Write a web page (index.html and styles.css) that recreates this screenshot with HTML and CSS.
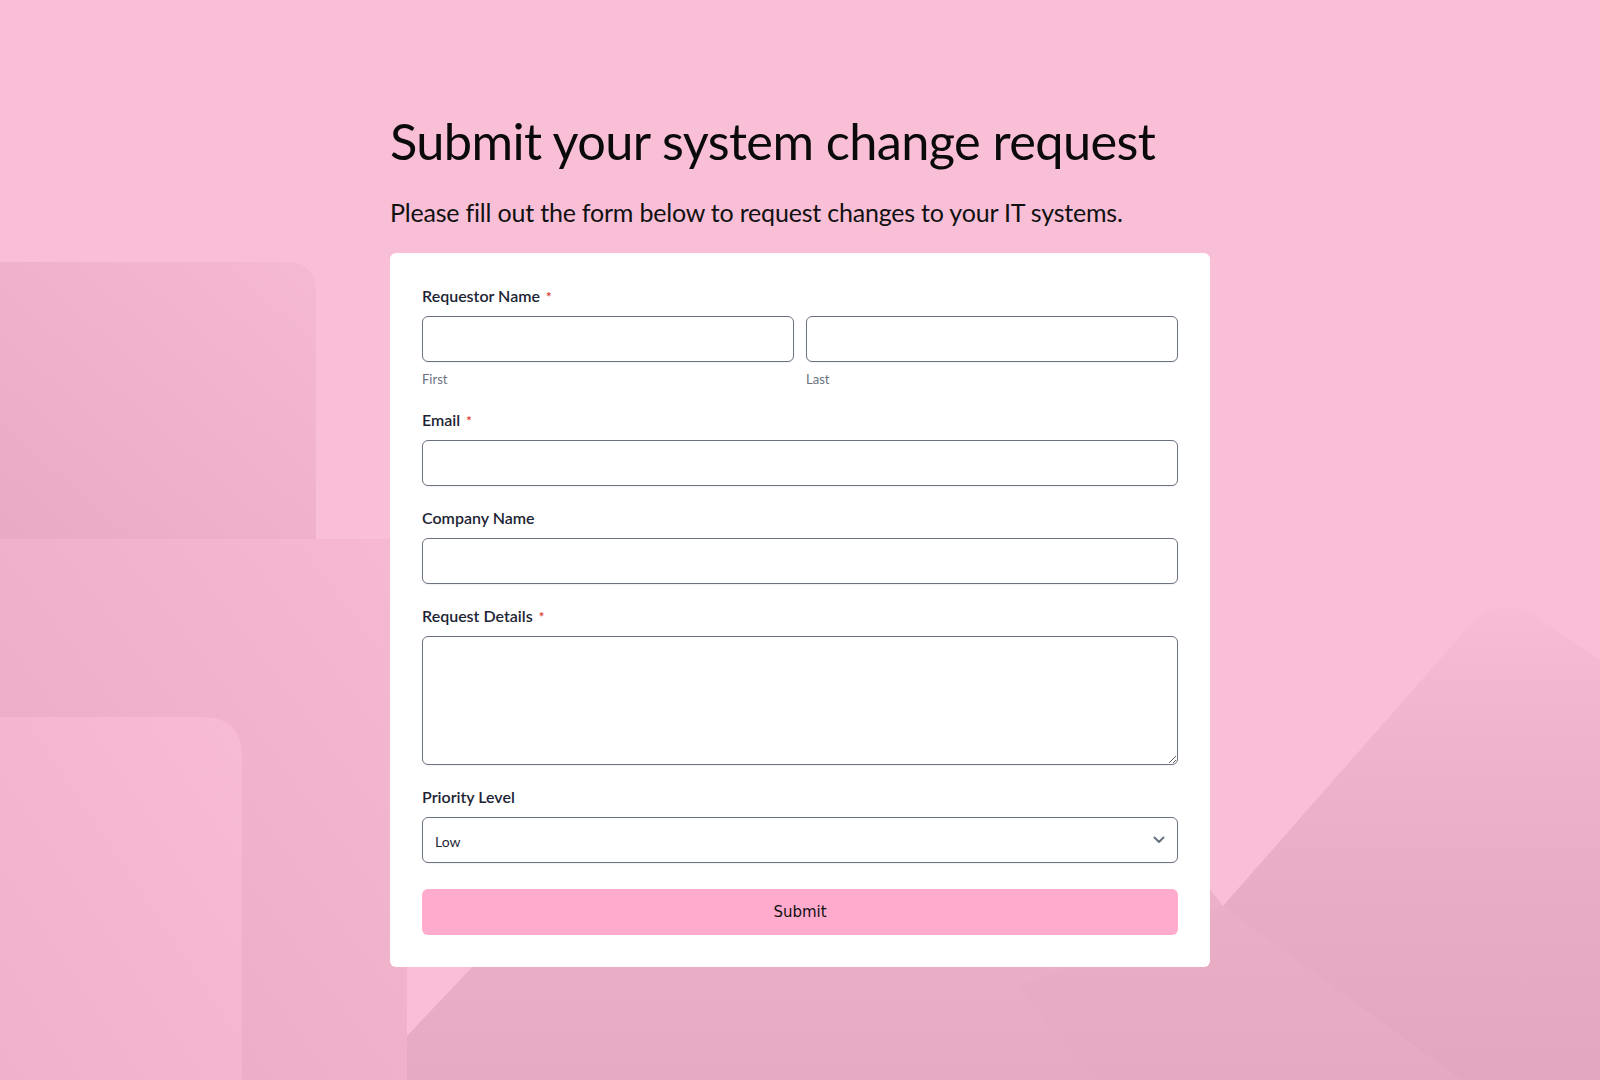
FILE: index.html
```html
<!DOCTYPE html>
<html lang="en">
<head>
  <meta charset="UTF-8" />
  <meta name="viewport" content="width=device-width, initial-scale=1" />
  <title>System Change Request</title>
  <link rel="stylesheet" href="styles.css">
</head>
<body>

  <!-- background shapes -->
  <svg class="bg" viewBox="0 0 1600 1080" preserveAspectRatio="none" aria-hidden="true">
    <defs>
      <linearGradient id="gA" x1="1" y1="0" x2="0" y2="1">
        <stop offset="0" stop-color="#f5b9d1"/>
        <stop offset="1" stop-color="#e9abc4"/>
      </linearGradient>
      <linearGradient id="gB" x1="1" y1="0" x2="0" y2="1">
        <stop offset="0" stop-color="#f6b9d1"/>
        <stop offset="1" stop-color="#e7aac3"/>
      </linearGradient>
      <linearGradient id="gC" x1="1" y1="0" x2="0" y2="1">
        <stop offset="0" stop-color="#f7bbd3"/>
        <stop offset="1" stop-color="#efb2ca"/>
      </linearGradient>
      <linearGradient id="gD" x1="0" y1="0" x2="0" y2="1">
        <stop offset="0" stop-color="#f8bdd5"/>
        <stop offset="0.45" stop-color="#efb3cb"/>
        <stop offset="1" stop-color="#e6aac2"/>
      </linearGradient>
      <linearGradient id="gE" x1="0" y1="0" x2="0" y2="1">
        <stop offset="0" stop-color="#e2a6bf" stop-opacity="0"/>
        <stop offset="1" stop-color="#e0a4bd" stop-opacity="0.6"/>
      </linearGradient>
    </defs>
    <rect width="1600" height="1080" fill="#f9bfd7"/>
    <path d="M0 262 H286 Q316 262 316 292 V539 H0 Z" fill="url(#gA)"/>
    <rect x="0" y="539" width="407" height="541" fill="url(#gB)"/>
    <path d="M0 717 H202 Q242 717 242 757 V1080 H0 Z" fill="url(#gC)"/>
    <path d="M407 1036 L474 965 L1209 888 L1223 906 L1470 625 Q1500 595 1535 615 L1600 660 V1080 H407 Z" fill="url(#gD)"/>
    <path d="M1223 906 L1470 625 Q1500 595 1535 615 L1600 660 V1080 H1462 Z" fill="url(#gE)"/>
    <path d="M1018 987 L1223 906 L1462 1080 H1095 Z" fill="#e6aac2" opacity="0.3"/>
  </svg>

  <main class="page">
    <h1 class="title">Submit your system change request</h1>
    <p class="subtitle">Please fill out the form below to request changes to your IT systems.</p>

    <form class="card">
      <div class="field">
        <label class="label">Requestor Name <span class="req">*</span></label>
        <div class="name-row">
          <div>
            <input type="text" class="input">
            <div class="sublabel">First</div>
          </div>
          <div>
            <input type="text" class="input">
            <div class="sublabel">Last</div>
          </div>
        </div>
      </div>

      <div class="field">
        <label class="label">Email <span class="req">*</span></label>
        <input type="email" class="input">
      </div>

      <div class="field">
        <label class="label">Company Name</label>
        <input type="text" class="input">
      </div>

      <div class="field">
        <label class="label">Request Details <span class="req">*</span></label>
        <textarea class="input textarea"></textarea>
      </div>

      <div class="field">
        <label class="label">Priority Level</label>
        <div class="select-wrap">
          <select class="input select">
            <option>Low</option>
            <option>Medium</option>
            <option>High</option>
          </select>
          <svg class="chevron" width="12" height="8" viewBox="0 0 12 8"><path d="M1.5 1.5 L6 6 L10.5 1.5" fill="none" stroke="#6b7280" stroke-width="2" stroke-linecap="round" stroke-linejoin="round"/></svg>
        </div>
      </div>

      <button type="button" class="submit">Submit</button>
    </form>
  </main>

</body>
</html>
```

FILE: styles.css
```css
html, body {
  margin: 0;
  height: 100%;
}
body {
  font-family: Lato, "Open Sans", sans-serif;
  background: #f9bfd7;
  position: relative;
  overflow: hidden;
}
.bg {
  position: absolute;
  left: 0;
  top: 0;
  width: 100%;
  height: 100%;
  z-index: 0;
}
.page {
  position: relative;
  z-index: 1;
  width: 820px;
  margin: 0 auto;
  padding-top: 111px;
}
.title {
  margin: 0;
  font-size: 50.5px;
  font-weight: 400;
  line-height: 60px;
  letter-spacing: -0.6px;
  color: #0a0a0a;
}
.subtitle {
  margin: 26px 0 26px;
  font-size: 25px;
  line-height: 30px;
  letter-spacing: -0.2px;
  color: #111;
}
.card {
  background: #fff;
  border-radius: 6px;
  padding: 32px;
  display: flex;
  flex-direction: column;
  gap: 21px;
}
.field {
  display: flex;
  flex-direction: column;
  gap: 9px;
}
.label {
  font-size: 16px;
  line-height: 22px;
  font-weight: 600;
  color: #1c2434;
}
.req {
  color: #d93025;
  font-size: 13px;
  margin-left: 2px;
  line-height: 1;
}
.name-row {
  display: grid;
  grid-template-columns: 1fr 1fr;
  gap: 12px;
}
.input {
  display: block;
  box-sizing: border-box;
  width: 100%;
  height: 46px;
  border: 1px solid #6b7280;
  border-radius: 6px;
  background: #fff;
  box-shadow: 0 1px 2px rgba(0,0,0,0.06);
  font-family: Lato, sans-serif;
  font-size: 14px;
  color: #1f2937;
  padding: 0 12px;
}
.sublabel {
  margin-top: 8px;
  font-size: 13px;
  line-height: 18px;
  color: #6b7280;
}
.textarea {
  height: 129px;
  padding: 10px 12px;
  resize: vertical;
}
.select-wrap {
  position: relative;
}
.select {
  appearance: none;
  -webkit-appearance: none;
  padding-top: 2px;
}
.chevron {
  position: absolute;
  right: 13px;
  top: 19px;
  pointer-events: none;
}
.submit {
  margin-top: 5px;
  height: 46px;
  border: none;
  border-radius: 6px;
  background: #ffabcd;
  color: #111;
  font-family: "DejaVu Sans", sans-serif;
  font-size: 15px;
  cursor: pointer;
}
.submit:hover {
  background: #ff9fc6;
}
```
